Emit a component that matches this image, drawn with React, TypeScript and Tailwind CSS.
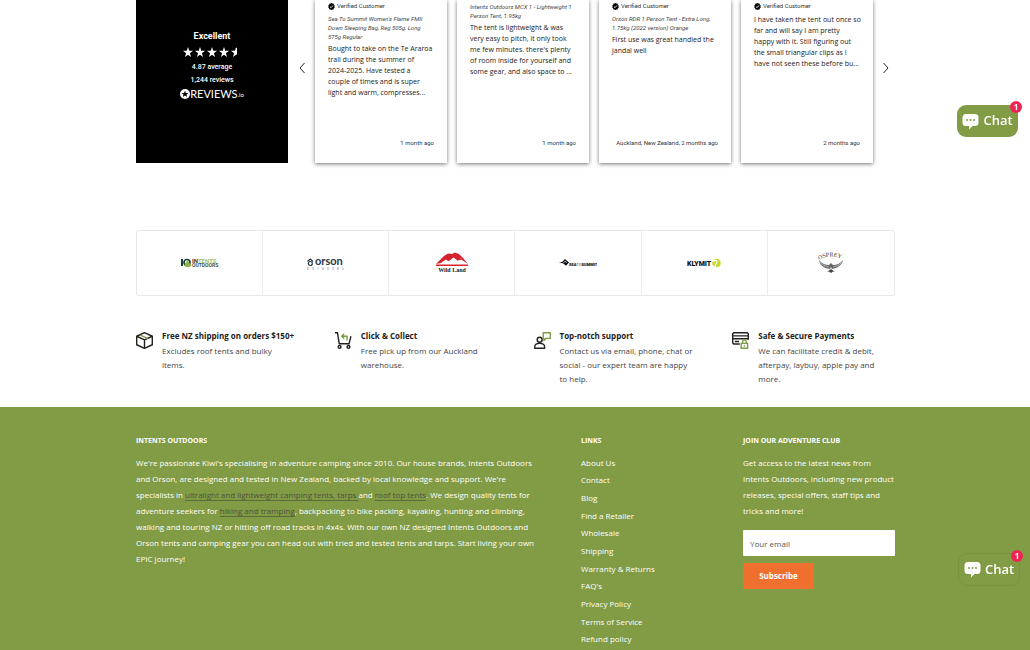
import React, { ReactNode } from "react";

function Star({ half = false }: { half?: boolean }) {
  return (
    <svg viewBox="0 0 20 20" className="size-[10px]" aria-hidden="true">
      <path
        fill="#fff"
        d={half ? "M12 1.500v13.600l-2 .5L3.800 20l2.400-7.600L0 7.600h7.600l2.400-6z" : "M10 0l2.400 7.600H20l-6.200 4.800 2.400 7.600-6.200-4.400L3.800 20l2.400-7.600L0 7.600h7.600z"}
      />
    </svg>
  );
}

function Tick() {
  return (
    <svg viewBox="0 0 24 24" className="size-[7px]" aria-hidden="true">
      <path d="M12 0l3 2 4 0 1 4 3 2-1 4 1 4-3 2-1 4-4 0-3 2-3-2-4 0-1-4-3-2 1-4-1-4 3-2 1-4 4 0z" fill="#000" />
      <path d="M7 12.5l3.5 3.5L17 8.5" fill="none" stroke="#fff" strokeWidth="3" />
    </svg>
  );
}

function Arrow({ d, label }: { d: string; label: string }) {
  return (
    <button aria-label={label}>
      <svg viewBox="0 0 6 12" className="h-[12px] w-[6px]" fill="none" stroke="#222" strokeWidth="1">
        <path d={d} />
      </svg>
    </button>
  );
}

type Review = { verified: boolean; product?: ReactNode; body: ReactNode; meta: string };

const reviews: Review[] = [
  {
    verified: true,
    product: <>Sea To Summit Women's Flame FMII<br />Down Sleeping Bag, Reg 505g, Long<br />575g Regular</>,
    body: <>Bought to take on the Te Araroa<br />trail during the summer of<br />2024-2025. Have tested a<br />couple of times and is super<br />light and warm, compresses...</>,
    meta: "1 month ago",
  },
  {
    verified: false,
    product: <>Intents Outdoors MCX 1 - Lightweight 1<br />Person Tent, 1.95kg</>,
    body: <>The tent is lightweight &amp; was<br />very easy to pitch, it only took<br />me few minutes. there's plenty<br />of room inside for yourself and<br />some gear, and also space to ...</>,
    meta: "1 month ago",
  },
  {
    verified: true,
    product: <>Orson RDR 1 Person Tent - Extra Long,<br />1.75kg (2022 version) Orange</>,
    body: <>First use was great handled the<br />jandal well</>,
    meta: "Auckland, New Zealand, 2 months ago",
  },
  {
    verified: true,
    body: <>I have taken the tent out once so<br />far and will say I am pretty<br />happy with it. Still figuring out<br />the small triangular clips as I<br />have not seen these before bu...</>,
    meta: "2 months ago",
  },
];

function ReviewCard({ verified, product, body, meta }: Review) {
  return (
    <article className="flex min-h-[163px] flex-col whitespace-nowrap bg-white px-[13px] pb-[15px] pt-[2px] shadow-[0_1px_4px_rgba(0,0,0,0.55)]">
      {verified && (
        <p className='mb-[4px] flex items-center gap-[2px] font-["Roboto",sans-serif] text-[6px] leading-[8px] text-[#333]'>
          <Tick />
          Verified Customer
        </p>
      )}
      {product && <p className='mb-[2px] font-["Roboto",sans-serif] text-[6px] italic leading-[9px] text-[#444]'>{product}</p>}
      <p className="text-[7px] leading-[11px] text-[#222]">{body}</p>
      <p className='mt-auto text-right font-["Roboto",sans-serif] text-[6px] leading-[10px] text-[#333]'>{meta}</p>
    </article>
  );
}

function IntentsLogo() {
  return (
    <svg viewBox="0 0 38 10" className="h-[10px] w-[38px]" role="img" aria-label="Intents Outdoors">
      <path d="M0 1h2v7H0z" fill="#1d4038" />
      <circle cx="6" cy="4.500" r="3" fill="none" stroke="#1d4038" strokeWidth="1.700" />
      <path d="M3 7.500l3.500-5 4 5a5 5 0 0 1-7.500 0z" fill="#8fb43f" />
      <text x="11" y="5" fontSize="6" fontWeight="700" fill="#1d4038" fontFamily="Roboto, sans-serif">IN<tspan fill="#a4c06a">TENTS</tspan></text>
      <text x="11" y="9" fontSize="5" fontWeight="700" fill="#355a50" fontFamily="Roboto, sans-serif">OUTDOORS</text>
    </svg>
  );
}

function OrsonLogo() {
  return (
    <svg viewBox="0 0 42 16" className="h-[16px] w-[42px]" role="img" aria-label="Orson Outdoors">
      <g fill="none" stroke="#253746" strokeWidth="1.200">
        <path d="M2.500 6.500L5.300 4l2.800 2.500" />
        <circle cx="5.300" cy="8.500" r="2" />
      </g>
      <text x="10" y="10" fontSize="11" fontWeight="700" fill="#253746" fontFamily="Lato, sans-serif">orson</text>
      <g fontSize="3" fill="#778" fontFamily="Roboto, sans-serif">
        <text x="2" y="15">O</text><text x="7" y="15">U</text><text x="12" y="15">T</text><text x="17" y="15">D</text>
        <text x="22" y="15">O</text><text x="27" y="15">O</text><text x="32" y="15">R</text><text x="37" y="15">S</text>
      </g>
    </svg>
  );
}

function WildLandLogo() {
  return (
    <svg viewBox="0 0 34 22" className="h-[22px] w-[34px]" role="img" aria-label="Wild Land">
      <path d="M1 12L9 4l4-2.500L17 2l3-1.500 4 1.500 4 4 5 6-6-4-2-2-2 3-5-4-5 4-2-2-5 4z" fill="#d8232f" />
      <path d="M5 10l6-5 10-2 6 5-4 0-4-3-5 4-3-1.500z" fill="#d8232f" />
      <path d="M1 12.500h32v1.500H1z" fill="#d8232f" />
      <text x="17" y="20" textAnchor="middle" fontSize="6" fontWeight="700" fill="#222" fontFamily="Liberation Serif, serif">Wild Land</text>
    </svg>
  );
}

function SummitLogo() {
  return (
    <svg viewBox="0 0 38 8" className="h-[8px] w-[38px]" role="img" aria-label="Sea to Summit">
      <path d="M0 3.700l3-.7L6 0l4 3.500-3 3.300-3-2.500z" fill="#111" />
      <path d="M4.500 3.500l2-1.300 1.200 1.600" fill="none" stroke="#fff" strokeWidth=".7" />
      <text x="10" y="7" fontSize="4" fontWeight="900" fill="#111" fontFamily="Roboto, sans-serif">SEA<tspan fill="#999">TO</tspan>SUMMIT</text>
    </svg>
  );
}

function KlymitLogo() {
  return (
    <svg viewBox="0 0 34 10" className="h-[10px] w-[34px]" role="img" aria-label="Klymit">
      <text x="0" y="8" fontSize="7" fontWeight="900" fill="#111" fontFamily="Roboto, sans-serif">KLYMIT</text>
      <circle cx="29.500" cy="5" r="4.300" fill="#c5d92d" />
      <path d="M26 3.500c2-2 5-1 3.500 1.500S28 7 28 9" fill="none" stroke="#fff" strokeWidth="1.200" />
    </svg>
  );
}

function OspreyLogo() {
  return (
    <svg viewBox="0 0 26 22" className="h-[22px] w-[26px]" role="img" aria-label="Osprey">
      <defs><path id="osprey-arc" d="M1 8Q13 1 26 8" /></defs>
      <text fontSize="6" fill="#333" fontFamily="Liberation Serif, serif"><textPath href="#osprey-arc">OSPREY</textPath></text>
      <path d="M1 8c1 5 4 8 11 9l1-2 1 2c6-1 10-4 11-9-2 3-6 5-10 5l-2-2-2 2C7 13 3 11 1 8z" fill="#666" />
      <path d="M2 10c2 3 5 4 9 5m13-5c-2 3-5 4-9 5" stroke="#fff" strokeWidth=".5" fill="none" />
      <path d="M9 20l4-3 4 3-2-.5-2 1.500-2-1.500z" fill="#444" />
    </svg>
  );
}

const brands = [IntentsLogo, OrsonLogo, WildLandLogo, SummitLogo, KlymitLogo, OspreyLogo];

function BoxIcon() {
  return (
    <svg viewBox="0 0 24 24" className="size-[17px] shrink-0" fill="none" stroke="#222" strokeWidth="2" strokeLinejoin="round">
      <path d="M12 1l11 5v12l-11 5-11-5V6z" />
      <path d="M1 6l11 5 11-5M12 11v12" />
      <path d="M6 4.500l11 5" stroke="#7f9c45" />
    </svg>
  );
}

function CartIcon() {
  return (
    <svg viewBox="0 0 24 24" className="size-[17px] shrink-0" fill="none" stroke="#222" strokeWidth="2">
      <path d="M0 1h3.500L6 16.500h15M22.500 6L20 16" />
      <circle cx="6.500" cy="21" r="2" />
      <circle cx="19" cy="21" r="2" />
      <path d="M13 2.500L9.500 6l3.500 3.500M9.500 6H17v6" stroke="#7f9c45" />
    </svg>
  );
}

function SupportIcon() {
  return (
    <svg viewBox="0 0 24 24" className="size-[17px] shrink-0" fill="none" stroke="#222" strokeWidth="2" strokeLinejoin="round">
      <circle cx="8" cy="11" r="3.500" />
      <path d="M1 23v-2c0-3 3-5 7-5s7 2 7 5v2z" />
      <path d="M13 1h10v8h-6l-3 3V9h-1z" stroke="#7f9c45" />
    </svg>
  );
}

function PaymentIcon() {
  return (
    <svg viewBox="0 0 24 24" className="size-[17px] shrink-0" fill="none" stroke="#222" strokeWidth="2">
      <path d="M11 17H2.500L1 15.500V2.500L2.500 1h19L23 2.500V11M1 5.500h22M1 9.500h22M4 13.500h6" />
      <path d="M13 16h9v7h-9zM15 16v-2.500a2.500 2.500 0 0 1 5 0V16M17.500 18.500v2" stroke="#7f9c45" />
    </svg>
  );
}

const features = [
  { Icon: BoxIcon, title: "Free NZ shipping on orders $150+", text: <>Excludes roof tents and bulky<br />items.</> },
  { Icon: CartIcon, title: "Click & Collect", text: <>Free pick up from our Auckland<br />warehouse.</> },
  { Icon: SupportIcon, title: "Top-notch support", text: <>Contact us via email, phone, chat or<br />social - our expert team are happy<br />to help.</> },
  { Icon: PaymentIcon, title: "Safe & Secure Payments", text: <>We can facilitate credit &amp; debit,<br />afterpay, laybuy, apple pay and<br />more.</> },
];

const links = ["About Us", "Contact", "Blog", "Find a Retailer", "Wholesale", "Shipping", "Warranty & Returns", "FAQ's", "Privacy Policy", "Terms of Service", "Refund policy"];

function InlineLink({ children }: { children: ReactNode }) {
  return <a href="#" className="text-[#4c5340] underline decoration-[#5b6b38] underline-offset-2">{children}</a>;
}

function ChatButton({ className }: { className: string }) {
  return (
    <button className={`fixed flex items-center justify-center gap-[4px] rounded-[9px] bg-[#829b45] font-["Open_Sans",sans-serif] text-[13px] font-semibold text-white ${className}`}>
      <svg viewBox="0 0 17 17" className="size-[17px]" aria-hidden="true">
        <path d="M4 1h9q3.500 0 3.500 3.500v5q0 3.500-3.500 3.500h-2.500L7 16.500V13H4Q.5 13 .5 9.500v-5Q.5 1 4 1z" fill="#fff" />
        <g fill="#829b45"><circle cx="5" cy="7" r="1" /><circle cx="8.500" cy="7" r="1" /><circle cx="12" cy="7" r="1" /></g>
      </svg>
      Chat
      <span className="absolute -right-[4px] -top-[4px] flex size-[12px] items-center justify-center rounded-full bg-[#ee2455] text-[8px] font-bold leading-none">1</span>
    </button>
  );
}

export default function App() {
  return (
    <div className='flex min-h-screen flex-col bg-white font-["Open_Sans",sans-serif]'>
      <section className="mx-auto flex w-full max-w-[760px] pl-px">
        <div className='flex w-[152px] shrink-0 flex-col items-center bg-black pt-[30px] font-["Roboto",sans-serif] text-white'>
          <h2 className="text-[9px] font-bold leading-[12px]">Excellent</h2>
          <div className="mt-[5px] flex gap-[2px]" role="img" aria-label="4.87 out of 5 stars">
            <Star /><Star /><Star /><Star /><Star half />
          </div>
          <p className="mt-[4px] text-[7px] font-medium leading-[13px]">4.87 average</p>
          <p className="text-[7px] font-medium leading-[13px]">1,244 reviews</p>
          <div className='flex items-center font-["Lato",sans-serif] text-[11px] leading-[13px]'>
            <svg viewBox="0 0 20 20" className="size-[10px]" aria-hidden="true">
              <circle cx="10" cy="10" r="10" fill="#fff" />
              <path d="M10 3l1.800 4.800H17l-4 3.200 1.500 5L10 13l-4.500 3L7 11 3 7.800h5.200z" fill="#000" />
            </svg>
            REVIEWS<span className="self-end text-[6px] leading-[10px]">.io</span>
          </div>
        </div>
        <div className="flex w-[27px] shrink-0 items-start justify-center pt-[62px]"><Arrow d="M5.500 1L1 6l4.500 5" label="Previous" /></div>
        <div className="grid min-w-0 flex-1 grid-cols-4 gap-[10px]">
          {reviews.map((r, i) => <ReviewCard key={i} {...r} />)}
        </div>
        <div className="flex w-[22px] shrink-0 items-start justify-center pl-[3px] pt-[62px]"><Arrow d="M.5 1L5 6 .5 11" label="Next" /></div>
      </section>

      <section className="mx-auto mt-[67px] w-full max-w-[760px] pl-px">
        <div className="grid h-[66px] grid-cols-6 divide-x divide-[#ececec] rounded-[2px] border border-[#e8e8e8]">
          {brands.map((Logo, i) => (
            <a key={i} href="#" className="flex items-center justify-center"><Logo /></a>
          ))}
        </div>
      </section>

      <section className="mx-auto mt-[32px] grid w-full max-w-[760px] grid-cols-4 gap-[36px] whitespace-nowrap pb-[21px] pl-px">
        {features.map(({ Icon, title, text }) => (
          <div key={title} className="flex gap-[9px]">
            <div className="pt-[4px]"><Icon /></div>
            <div>
              <h3 className="text-[8px] font-bold leading-[16px] text-[#1d1d1d]">{title}</h3>
              <p className="text-[8px] leading-[14px] text-[#444]">{text}</p>
            </div>
          </div>
        ))}
      </section>

      <footer className="flex-1 bg-[#829b45] font-medium text-white">
        <div className="mx-auto flex w-full max-w-[760px] items-start whitespace-nowrap pl-px pt-[28px] text-[8px] leading-[16px]">
          <div className="w-[445px]">
            <h2 className="mb-[8px] text-[7px] font-bold leading-[12px]">INTENTS OUTDOORS</h2>
            <p>
              We're passionate Kiwi's specialising in adventure camping since 2010. Our house brands, Intents Outdoors<br />
              and Orson, are designed and tested in New Zealand, backed by local knowledge and support. We're<br />
              specialists in <InlineLink>ultralight and lightweight camping tents, tarps </InlineLink>and <InlineLink>roof top tents</InlineLink>. We design quality tents for<br />
              adventure seekers for <InlineLink>hiking and tramping</InlineLink>, backpacking to bike packing, kayaking, hunting and climbing,<br />
              walking and touring NZ or hitting off road tracks in 4x4s. With our own NZ designed Intents Outdoors and<br />
              Orson tents and camping gear you can head out with tried and tested tents and tarps. Start living your own<br />
              EPIC journey!
            </p>
          </div>
          <nav className="w-[162px]" aria-label="Links">
            <h2 className="mb-[7px] text-[7px] font-bold leading-[12px]">LINKS</h2>
            <ul className="grid h-[194px] auto-rows-fr items-center">
              {links.map((l) => <li key={l}><a href="#">{l}</a></li>)}
            </ul>
          </nav>
          <form className="flex-1" onSubmit={(e) => e.preventDefault()}>
            <h2 className="mb-[8px] text-[7px] font-bold leading-[12px]">JOIN OUR ADVENTURE CLUB</h2>
            <p>Get access to the latest news from<br />Intents Outdoors, including new product<br />releases, special offers, staff tips and<br />tricks and more!</p>
            <input type="email" aria-label="Your email" placeholder="Your email" className="mt-[11px] block h-[26px] w-full rounded-[1px] bg-white px-[7px] text-[8px] font-normal text-[#333] placeholder:text-[#555]" />
            <button className="mt-[7px] block h-[26px] w-[71px] rounded-[1px] bg-[#ee6f2e] text-[8px] font-bold">Subscribe</button>
          </form>
        </div>
      </footer>

      <ChatButton className="right-[12px] top-[105px] h-[32px] w-[61px]" />
      <ChatButton className="right-[10px] top-[553px] h-[33px] w-[62px] border border-[#7a9340]" />
    </div>
  );
}
